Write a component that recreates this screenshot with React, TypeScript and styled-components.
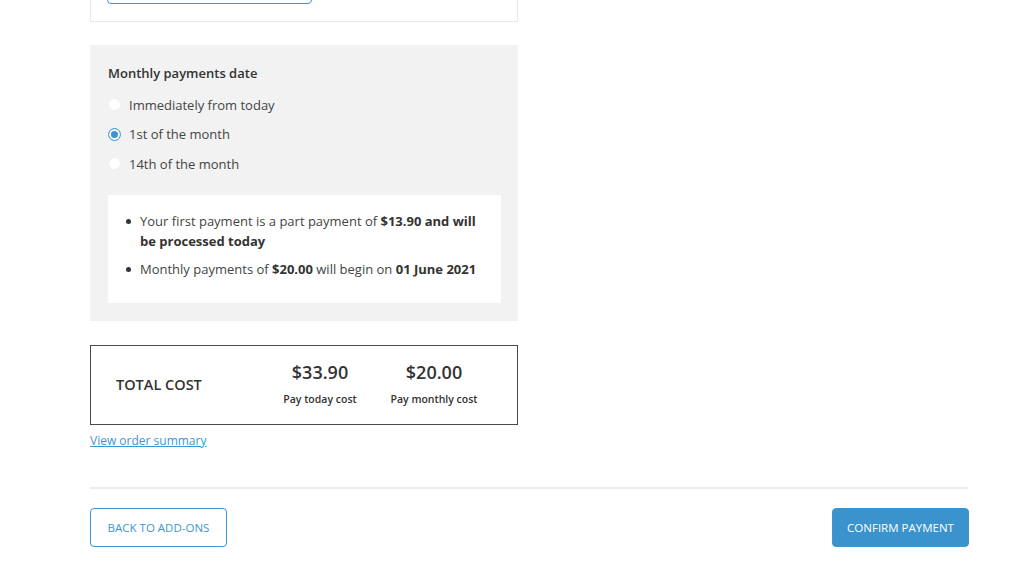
import React from "react";
import styled, { createGlobalStyle } from "styled-components";

const Global = createGlobalStyle`
  html, body { margin: 0; padding: 0; background: #ffffff; }
  body { font-family: "Open Sans", "Noto Sans", sans-serif; color: #333333; overflow: hidden; }
  * { box-sizing: border-box; }
`;

const Page = styled.div`
  width: 1024px;
  height: 577px;
  overflow: hidden;
  padding: 0 56px 0 90px;
`;

const Column = styled.div`
  width: 428px;
  display: flex;
  flex-direction: column;
`;

const TopCard = styled.div`
  margin-top: -60px;
  height: 82px;
  border: 1px solid #e8e8e8;
  border-top: none;
  background: #fff;
  padding: 20px 16px 17px;
  display: flex;
  align-items: flex-end;
`;

const OutlineBar = styled.div`
  width: 205px;
  height: 44px;
  border: 1px solid #3b96d2;
  border-radius: 4px;
`;

const Panel = styled.section`
  margin-top: 23px;
  background: #f2f2f2;
  padding: 18px 17px 18px 18px;
`;

const PanelTitle = styled.h3`
  margin: 0 0 7px;
  font-size: 13px;
  line-height: 20px;
  font-weight: 600;
  color: #333;
`;

const RadioList = styled.div`
  display: flex;
  flex-direction: column;
`;

const RadioRow = styled.label`
  display: flex;
  align-items: center;
  gap: 8px;
  height: 29.5px;
  font-size: 13px;
  color: #444;
  cursor: pointer;
`;

const RadioDot = styled.span<{ $checked?: boolean }>`
  width: 13px;
  height: 13px;
  border-radius: 50%;
  background: #fff;
  border: 1px solid ${(p) => (p.$checked ? "#3b96d2" : "#f0f0f0")};
  box-shadow: ${(p) => (p.$checked ? "inset 0 0 0 2px #fff, inset 0 0 0 6px #3b96d2" : "none")};
  flex: none;
`;

const InfoBox = styled.div`
  margin-top: 16px;
  background: #fff;
  padding: 16px 20px 24px 32px;
`;

const InfoList = styled.ul`
  margin: 0;
  padding: 0;
  list-style: none;
  display: flex;
  flex-direction: column;
  gap: 8px;
`;

const InfoItem = styled.li`
  position: relative;
  font-size: 13px;
  line-height: 20px;
  color: #444;
  &::before {
    content: "";
    position: absolute;
    left: -14px;
    top: 8px;
    width: 5px;
    height: 5px;
    border-radius: 50%;
    background: #333;
  }
  b { font-weight: 700; color: #333; }
`;

const TotalBox = styled.div`
  margin-top: 24px;
  border: 1px solid #4a4a4a;
  height: 80px;
  display: grid;
  grid-template-columns: 144px 120px 108px;
  align-items: center;
  padding-left: 25px;
`;

const TotalLabel = styled.div`
  font-size: 14.5px;
  font-weight: 600;
  color: #333;
`;

const CostCol = styled.div`
  display: flex;
  flex-direction: column;
  align-items: center;
  gap: 9px;
  padding-bottom: 2px;
`;

const CostValue = styled.div`
  font-size: 18px;
  font-weight: 600;
  line-height: 22px;
  color: #333;
`;

const CostCaption = styled.div`
  font-size: 10.5px;
  font-weight: 600;
  line-height: 14px;
  color: #333;
`;

const SummaryLink = styled.a`
  margin-top: 7px;
  font-size: 12px;
  line-height: 18px;
  color: #3b96d2;
  text-decoration: underline;
  align-self: flex-start;
`;

const Divider = styled.hr`
  margin: 37px 0 0;
  border: none;
  border-top: 2px solid #eeeeee;
  width: 878px;
`;

const Actions = styled.div`
  width: 879px;
  margin-top: 19px;
  display: flex;
  justify-content: space-between;
`;

const Button = styled.button<{ $primary?: boolean }>`
  width: 137px;
  height: 39px;
  border-radius: 4px;
  border: 1px solid #3b96d2;
  background: ${(p) => (p.$primary ? "#3a93cc" : "#fff")};
  color: ${(p) => (p.$primary ? "#fff" : "#3b96d2")};
  font-family: inherit;
  font-size: 11.5px;
  text-transform: uppercase;
  cursor: pointer;
`;

export default function App() {
  return (
    <Page>
      <Global />
      <Column>
        <TopCard>
          <OutlineBar />
        </TopCard>
        <Panel>
          <PanelTitle>Monthly payments date</PanelTitle>
          <RadioList>
            <RadioRow>
              <RadioDot />
              Immediately from today
            </RadioRow>
            <RadioRow>
              <RadioDot $checked />
              1st of the month
            </RadioRow>
            <RadioRow>
              <RadioDot />
              14th of the month
            </RadioRow>
          </RadioList>
          <InfoBox>
            <InfoList>
              <InfoItem>
                Your first payment is a part payment of <b>$13.90 and will be processed today</b>
              </InfoItem>
              <InfoItem>
                Monthly payments of <b>$20.00</b> will begin on <b>01 June 2021</b>
              </InfoItem>
            </InfoList>
          </InfoBox>
        </Panel>
        <TotalBox>
          <TotalLabel>TOTAL COST</TotalLabel>
          <CostCol>
            <CostValue>$33.90</CostValue>
            <CostCaption>Pay today cost</CostCaption>
          </CostCol>
          <CostCol>
            <CostValue>$20.00</CostValue>
            <CostCaption>Pay monthly cost</CostCaption>
          </CostCol>
        </TotalBox>
        <SummaryLink href="#">View order summary</SummaryLink>
      </Column>
      <Divider />
      <Actions>
        <Button>Back to add-ons</Button>
        <Button $primary>Confirm payment</Button>
      </Actions>
    </Page>
  );
}
